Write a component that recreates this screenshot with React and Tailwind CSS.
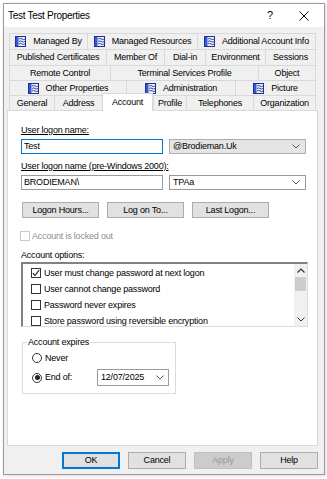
import React from "react";

const PropIcon = () => (
  <svg width="11" height="11" viewBox="0 0 11 11" className="shrink-0">
    <rect x="0" y="0" width="11" height="11" fill="#1b2f96" />
    <rect x="1" y="1" width="9" height="9" fill="#eef2fd" />
    <rect x="1" y="1" width="2.5" height="9" fill="#3a58c9" />
    <path
      d="M4 3 q1.5 -1.2 3 0 t3 0 M4 5.5 q1.5 -1.2 3 0 t3 0 M4 8 q1.5 -1.2 3 0 t3 0"
      stroke="#1b2f96"
      strokeWidth="0.9"
      fill="none"
    />
  </svg>
);

const Chevron = ({ color = "#555" }) => (
  <svg width="8" height="5" viewBox="0 0 8 5">
    <path d="M0.5 0.5 L4 4 L7.5 0.5" stroke={color} strokeWidth="1" fill="none" />
  </svg>
);

const ChevronUp = () => (
  <svg width="8" height="5" viewBox="0 0 8 5">
    <path d="M0.5 4.5 L4 1 L7.5 4.5" stroke="#333" strokeWidth="1.2" fill="none" />
  </svg>
);

const Checkbox = ({ checked, disabled }) => (
  <div
    className={`w-[10px] h-[10px] shrink-0 border bg-white flex items-center justify-center ${
      disabled ? "border-[#c8c8c8]" : "border-[#333]"
    }`}
  >
    {checked && (
      <svg width="8" height="8" viewBox="0 0 8 8">
        <path d="M0.8 4.2 L3 6.4 L7.2 1.2" stroke="#222" strokeWidth="1.1" fill="none" />
      </svg>
    )}
  </div>
);

const Radio = ({ checked }) => (
  <div className="w-[10px] h-[10px] shrink-0 rounded-full border border-[#333] bg-white flex items-center justify-center">
    {checked && <div className="w-[5px] h-[5px] rounded-full bg-[#222]" />}
  </div>
);

const tabRows = [
  {
    h: "h-[16px]",
    tabs: [
      { w: "w-[78px]", label: "Managed By", icon: true },
      { w: "w-[110px]", label: "Managed Resources", icon: true },
      { w: "w-[119px]", label: "Additional Account Info", icon: true },
    ],
  },
  {
    h: "h-[16px]",
    tabs: [
      { w: "w-[97px]", label: "Published Certificates" },
      { w: "w-[58px]", label: "Member Of" },
      { w: "w-[41px]", label: "Dial-in" },
      { w: "w-[60px]", label: "Environment" },
      { w: "w-[51px]", label: "Sessions" },
    ],
  },
  {
    h: "h-[15px]",
    tabs: [
      { w: "w-[101px]", label: "Remote Control" },
      { w: "w-[148px]", label: "Terminal Services Profile" },
      { w: "w-[58px]", label: "Object" },
    ],
  },
  {
    h: "h-[15px]",
    tabs: [
      { w: "w-[117px]", label: "Other Properties", icon: true },
      { w: "w-[109px]", label: "Administration", icon: true },
      { w: "w-[81px]", label: "Picture", icon: true },
    ],
  },
  {
    h: "h-[15px]",
    tabs: [
      { w: "w-[45px]", label: "General" },
      { w: "w-[48px]", label: "Address" },
      { w: "w-[51px]", label: "Account", selected: true },
      { w: "w-[33px]", label: "Profile" },
      { w: "w-[67px]", label: "Telephones" },
      { w: "w-[63px]", label: "Organization" },
    ],
  },
];

const options = [
  { label: "User must change password at next logon", checked: true },
  { label: "User cannot change password" },
  { label: "Password never expires" },
  { label: "Store password using reversible encryption" },
];

export default function App() {
  return (
    <div className="w-[327px] h-[479px] bg-white pt-[3px] pl-[3px] overflow-hidden font-['Liberation_Sans',Arial,sans-serif] text-[9px] leading-[11px] tracking-[-0.2px] text-black">
      <div className="w-[322px] h-[472px] border border-[#9a9a9a] bg-[#f0f0f0] flex flex-col shadow-[1px_1px_3px_rgba(0,0,0,0.15)]">
        {/* title bar */}
        <div className="h-[23px] bg-white flex items-center shrink-0">
          <span className="pl-[4px] text-[10px] tracking-[-0.3px] flex-1">Test Test Properties</span>
          <div className="w-[28px] text-center text-[11px]">?</div>
          <div className="w-[40px] flex justify-center">
            <svg width="10" height="10" viewBox="0 0 10 10">
              <path d="M0.5 0.5 L9.5 9.5 M9.5 0.5 L0.5 9.5" stroke="#111" strokeWidth="1" />
            </svg>
          </div>
        </div>

        {/* body */}
        <div className="flex-1 flex flex-col pt-[6px] pl-[3px] pr-[6px] pb-[5px]">
          <div className="w-[311px] flex flex-col">
            {tabRows.map((row, ri) => (
              <div key={ri} className={`flex items-end px-[2px] ${row.h}`}>
                {row.tabs.map((t, ti) => {
                  const last = ti === row.tabs.length - 1;
                  if (t.selected) {
                    return (
                      <div
                        key={t.label}
                        className={`${t.w} h-[18px] -mb-px relative z-10 bg-white border-t border-l border-r border-[#d9d9d9] flex items-center justify-center`}
                      >
                        {t.label}
                      </div>
                    );
                  }
                  return (
                    <div
                      key={t.label}
                      className={`${t.w} h-full bg-[#f0f0f0] border-t border-l border-[#d9d9d9] ${
                        last ? "border-r" : ""
                      } flex items-center justify-center gap-[7px] whitespace-nowrap`}
                    >
                      {t.icon && <PropIcon />}
                      <span>{t.label}</span>
                    </div>
                  );
                })}
              </div>
            ))}

            {/* panel */}
            <div className="h-[336px] bg-white border border-[#d9d9d9] pl-[13px] pt-[14px] flex flex-col">
              <div className="h-[11px] underline">User logon name:</div>
              <div className="mt-[3px] flex gap-[6px]">
                <div className="w-[142px] h-[15px] border border-[#0078d7] bg-white pl-[2px] flex items-center">
                  Test
                </div>
                <div className="w-[137px] h-[15px] border border-[#adadad] bg-[#e5e5e5] pl-[3px] pr-[5px] flex items-center justify-between">
                  <span>@Brodieman.Uk</span>
                  <Chevron />
                </div>
              </div>

              <div className="mt-[7px] h-[11px] underline">User logon name (pre-Windows 2000):</div>
              <div className="mt-[3px] flex gap-[6px]">
                <div className="w-[142px] h-[15px] border border-[#9a9a9a] bg-white pl-[2px] flex items-center">
                  BRODIEMAN\
                </div>
                <div className="w-[137px] h-[15px] border border-[#9a9a9a] bg-white pl-[3px] pr-[5px] flex items-center justify-between">
                  <span>TPAa</span>
                  <Chevron />
                </div>
              </div>

              <div className="mt-[12px] ml-[1px] flex gap-[8px]">
                {["Logon Hours...", "Log on To...", "Last Logon..."].map((b) => (
                  <div
                    key={b}
                    className="w-[77px] h-[16px] bg-[#e1e1e1] border border-[#adadad] flex items-center justify-center"
                  >
                    {b}
                  </div>
                ))}
              </div>

              <div className="mt-[13px] -ml-[1px] h-[10px] flex items-center gap-[2px]">
                <Checkbox disabled />
                <span className="text-[#8d8d8d]">Account is locked out</span>
              </div>

              <div className="mt-[9px] h-[11px]">Account options:</div>
              <div className="mt-[1px] w-[287px] h-[65px] flex border-l-2 border-t-2 border-l-[#828282] border-t-[#828282] border-r border-b border-r-[#dcdcdc] border-b-[#dcdcdc] bg-white overflow-hidden">
                <div className="flex-1 pl-[8px] pt-[1px] flex flex-col">
                  {options.map((o) => (
                    <div key={o.label} className="h-[16px] shrink-0 flex items-center gap-[3px]">
                      <Checkbox checked={o.checked} />
                      <span>{o.label}</span>
                    </div>
                  ))}
                </div>
                <div className="w-[13px] bg-[#f0f0f0] flex flex-col">
                  <div className="h-[13px] flex items-center justify-center">
                    <ChevronUp />
                  </div>
                  <div className="mx-[1px] h-[14px] bg-[#cdcdcd]" />
                  <div className="flex-1" />
                  <div className="h-[13px] flex items-center justify-center">
                    <Chevron color="#333" />
                  </div>
                </div>
              </div>

              <div className="mt-[15px] ml-[1px] w-[154px] h-[52px] border border-[#dcdcdc] relative pl-[9px] pt-[9px] flex flex-col">
                <span className="absolute left-[4px] top-[-6px] bg-white px-[1px]">Account expires</span>
                <div className="h-[12px] flex items-center gap-[3px]">
                  <Radio />
                  <span>Never</span>
                </div>
                <div className="mt-[5px] h-[17px] flex items-center gap-[3px]">
                  <Radio checked />
                  <span className="w-[49px]">End of:</span>
                  <div className="w-[72px] h-[17px] border border-[#9a9a9a] bg-white pl-[3px] pr-[4px] flex items-center justify-between">
                    <span>12/07/2025</span>
                    <Chevron />
                  </div>
                </div>
              </div>
            </div>
          </div>

          {/* dialog buttons */}
          <div className="mt-[6px] w-[311px] flex justify-end gap-[8px]">
            <div className="w-[58px] h-[17px] bg-[#e1e1e1] border-2 border-[#0078d7] flex items-center justify-center">
              OK
            </div>
            <div className="w-[58px] h-[17px] bg-[#e1e1e1] border border-[#adadad] flex items-center justify-center">
              Cancel
            </div>
            <div className="w-[58px] h-[17px] bg-[#cccccc] border border-[#bfbfbf] text-[#9a9a9a] flex items-center justify-center">
              Apply
            </div>
            <div className="w-[58px] h-[17px] bg-[#e1e1e1] border border-[#adadad] flex items-center justify-center">
              Help
            </div>
          </div>
        </div>
      </div>
    </div>
  );
}
